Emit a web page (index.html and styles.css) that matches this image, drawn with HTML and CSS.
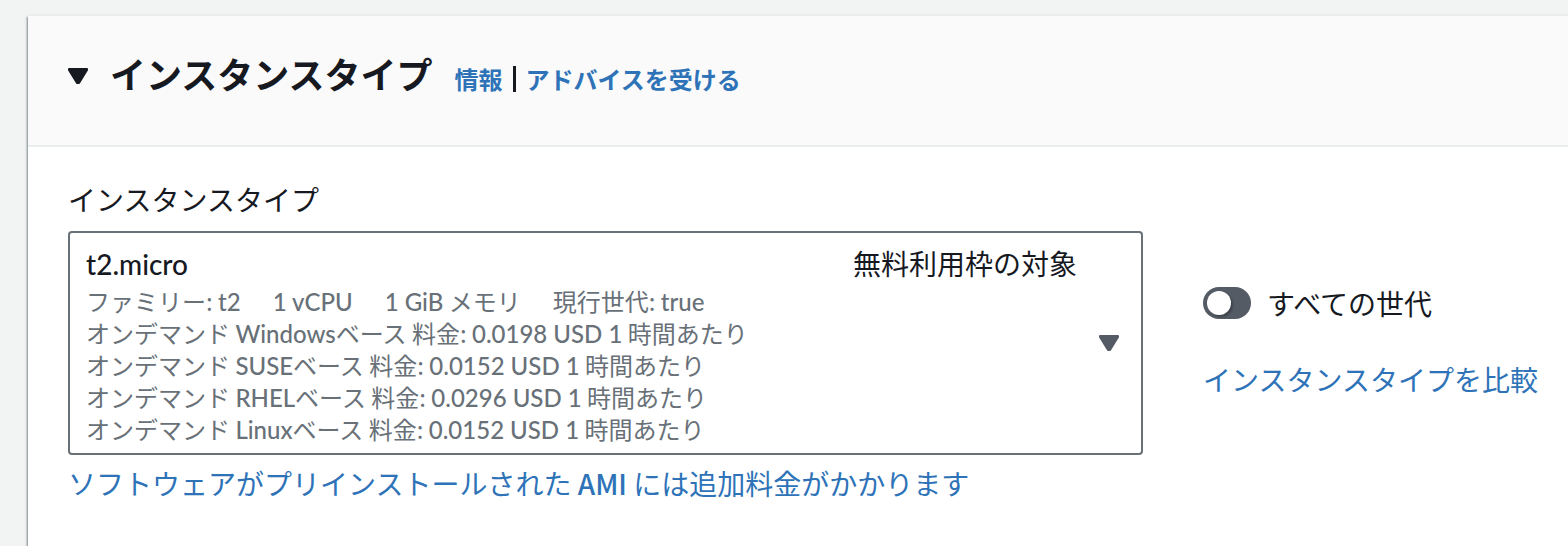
FILE: index.html
```html
<!DOCTYPE html>
<html lang="ja">
<head>
<meta charset="utf-8">
<meta name="viewport" content="width=device-width, initial-scale=1">
<title>インスタンスタイプ</title>
<link rel="stylesheet" href="styles.css">
</head>
<body>
<main class="panel">
  <header class="panel-header">
    <button class="toggle" type="button" aria-expanded="true" aria-controls="content">
      <svg class="caret" viewBox="0 0 20 16" aria-hidden="true"><path d="M1 1h18v1l-8 13H9L1 2z"/></svg>
      <span class="heading">インスタンスタイプ</span>
    </button>
    <div class="header-links">
      <a href="#info">情報</a>
      <span class="divider"></span>
      <a href="#advice">アドバイスを受ける</a>
    </div>
  </header>
  <section class="panel-content" id="content">
    <div class="field">
      <label class="field-label" for="instance-type">インスタンスタイプ</label>
      <button class="select" id="instance-type" type="button" aria-haspopup="listbox">
        <span class="option">
          <span class="option-title"><span class="latin">t2.micro</span><span>無料利用枠の対象</span></span>
          <span class="tags"><span>ファミリー: <span class="latin">t2</span></span><span class="latin">1 vCPU</span><span><span class="latin">1 GiB</span> メモリ</span><span>現行世代: <span class="latin">true</span></span></span>
          <span class="price">オンデマンド <span class="latin">Windows</span>ベース 料金: <span class="latin">0.0198 USD 1</span> 時間あたり</span>
          <span class="price">オンデマンド <span class="latin">SUSE</span>ベース 料金: <span class="latin">0.0152 USD 1</span> 時間あたり</span>
          <span class="price">オンデマンド <span class="latin">RHEL</span>ベース 料金: <span class="latin">0.0296 USD 1</span> 時間あたり</span>
          <span class="price">オンデマンド <span class="latin">Linux</span>ベース 料金: <span class="latin">0.0152 USD 1</span> 時間あたり</span>
        </span>
        <svg class="caret" viewBox="0 0 20 16" aria-hidden="true"><path d="M1 1h18v1l-8 13H9L1 2z"/></svg>
      </button>
      <a class="note" href="#ami">ソフトウェアがプリインストールされた <span class="note-term">AMI</span> には追加料金がかかります</a>
    </div>
    <div class="side">
      <label class="switch"><input type="checkbox" role="switch">すべての世代</label>
      <a href="#compare">インスタンスタイプを比較</a>
    </div>
  </section>
</main>
</body>
</html>
```

FILE: styles.css
```css
* {
  box-sizing: border-box;
}

body {
  margin: 0;
  padding: 16px 0 0 28px;
  background: #f2f3f3;
  color: #16191f;
  font-family: "Noto Sans CJK JP", sans-serif;
  font-size: 28px;
  line-height: 40px;
}

button {
  font: inherit;
  color: inherit;
  text-align: left;
  cursor: pointer;
}

a {
  color: #2e73b8;
  text-decoration: none;
}

.latin {
  font-family: "Lato Medium", Lato, "Noto Sans CJK JP", sans-serif;
  font-weight: 500;
  line-height: 1;
}

.note-term {
  font-weight: 500;
}

.panel {
  min-height: calc(100vh - 16px);
  background: #fff;
  box-shadow: 0 -2px 0 #eaeded, -1px 1px 2px rgba(0, 28, 36, 0.5);
}

.panel-header {
  display: flex;
  align-items: baseline;
  gap: 22px;
  padding: 29px 40px 44px;
  background: #fafafa;
  border-bottom: 2px solid #eaeded;
}

.toggle {
  display: flex;
  align-items: baseline;
  gap: 22px;
  padding: 0;
  border: 0;
  background: none;
}

.heading {
  font-size: 36px;
  line-height: 56px;
  font-weight: 700;
}

.caret {
  flex: none;
  align-self: center;
  width: 20px;
  height: 16px;
  fill: currentColor;
  stroke: currentColor;
  stroke-width: 2px;
  stroke-linejoin: round;
}

.toggle .caret {
  margin-top: 6px;
}

.header-links {
  display: flex;
  align-items: baseline;
  gap: 10px;
  font-size: 24px;
  font-weight: 700;
}

.divider {
  align-self: center;
  width: 3px;
  height: 26px;
  background: #16191f;
}

.panel-content {
  display: grid;
  grid-template-columns: minmax(0, 1fr) auto;
  align-items: center;
  gap: 60px;
  padding: 32px 30px 40px 40px;
}

.field {
  display: flex;
  flex-direction: column;
  align-items: flex-start;
}

.field-label {
  margin-bottom: 12px;
}

.select {
  display: flex;
  align-items: center;
  gap: 22px;
  width: 100%;
  margin-bottom: 8px;
  padding: 8px 22px 8px 16px;
  border: 2px solid #687078;
  border-radius: 4px;
  background: #fff;
}

.select .caret {
  color: #545b64;
}

.option {
  flex: 1;
  color: #687078;
  font-size: 24px;
  line-height: 32px;
}

.option-title {
  display: flex;
  align-items: baseline;
  justify-content: space-between;
  color: #16191f;
  font-size: 28px;
  line-height: 44px;
}

.tags {
  display: flex;
  align-items: baseline;
  gap: 32px;
}

.price {
  display: block;
}

.side {
  display: flex;
  flex-direction: column;
  gap: 36px;
}

.switch {
  display: flex;
  align-items: center;
  gap: 16px;
}

.switch input {
  appearance: none;
  width: 48px;
  height: 32px;
  margin: 0;
  padding: 4px;
  border-radius: 16px;
  background: #545b64;
}

.switch input::before {
  content: "";
  display: block;
  width: 24px;
  height: 24px;
  border-radius: 50%;
  background: #fff;
  box-shadow: 2px 2px 2px rgba(0, 0, 0, 0.25);
}

.switch input:checked::before {
  margin-left: auto;
}
```
